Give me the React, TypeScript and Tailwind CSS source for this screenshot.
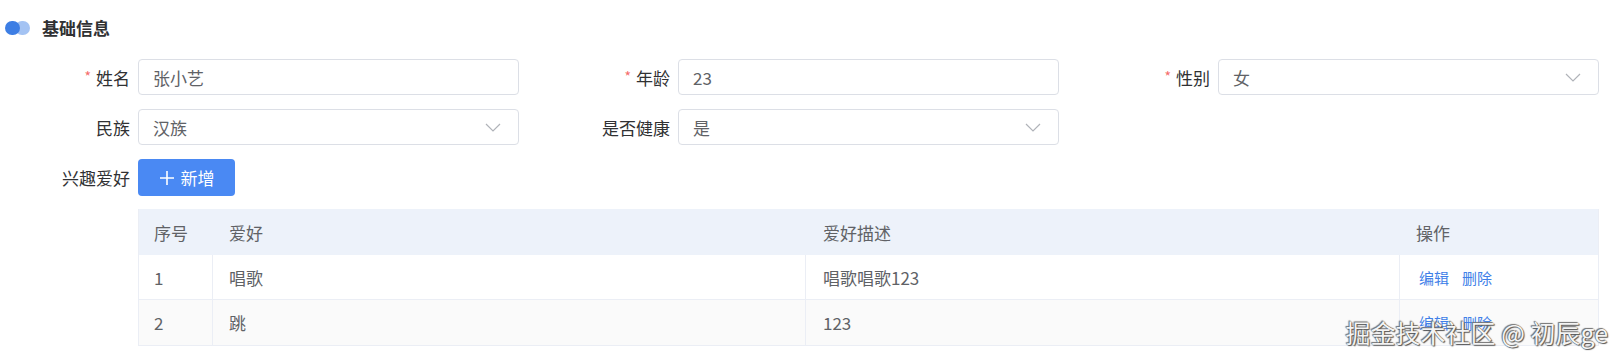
const hobbies = [
  { id: 1, name: '唱歌', desc: '唱歌唱歌123' },
  { id: 2, name: '跳', desc: '123' },
];

function Label({ text, required }: { text: string; required?: boolean }) {
  return (
    <div className="w-[78px] shrink-0 pr-2 flex items-center justify-end text-[17px] text-[#303133]">
      {required && <span className="text-[#f56c6c] text-[14px] mr-[5px] -mt-[2px]">*</span>}
      {text}
    </div>
  );
}

function Field({ value, select }: { value: string; select?: boolean }) {
  return (
    <div className="w-[381px] h-[36px] shrink-0 border border-[#dcdfe6] rounded-[4px] flex items-center justify-between pl-[14px] pr-[16px] text-[17px] text-[#606266]">
      <span>{value}</span>
      {select && (
        <svg width="16" height="9" viewBox="0 0 16 9" fill="none" className="mr-[1px]">
          <polyline points="1,1 8,8 15,1" stroke="#b0b3b9" strokeWidth="1.2" />
        </svg>
      )}
    </div>
  );
}

export default function App() {
  return (
    <div className="w-[1623px] h-[360px] bg-white relative overflow-hidden font-['Noto_Sans_CJK_SC',sans-serif] leading-none">
      <div className="h-[55px] flex items-center pl-[5px]">
        <div className="relative w-[26px] h-[14px] mr-[11px]">
          <span className="absolute left-[10px] top-0 w-[15px] h-[14px] rounded-full bg-[#a4c3f3]" />
          <span className="absolute left-0 top-0 w-[15px] h-[14px] rounded-full bg-[#3d7ee4]" />
        </div>
        <h1 className="text-[17px] font-bold text-[#303133]">基础信息</h1>
      </div>

      <div className="pl-[60px] pt-[4px]">
        <div className="flex h-[36px] mb-[14px]">
          <div className="w-[540px] shrink-0 flex">
            <Label text="姓名" required />
            <Field value="张小艺" />
          </div>
          <div className="w-[540px] shrink-0 flex">
            <Label text="年龄" required />
            <Field value="23" />
          </div>
          <div className="w-[540px] shrink-0 flex">
            <Label text="性别" required />
            <Field value="女" select />
          </div>
        </div>

        <div className="flex h-[36px] mb-[14px]">
          <div className="w-[540px] shrink-0 flex">
            <Label text="民族" />
            <Field value="汉族" select />
          </div>
          <div className="w-[540px] shrink-0 flex">
            <Label text="是否健康" />
            <Field value="是" select />
          </div>
        </div>

        <div className="flex h-[37px] mb-[13px]">
          <Label text="兴趣爱好" />
          <button className="w-[97px] h-[37px] rounded-[4px] bg-[#4a89f3] text-white text-[17px] flex items-center justify-center gap-[6px]">
            <svg width="16" height="16" viewBox="0 0 16 16" fill="none">
              <path d="M8 1v14M1 8h14" stroke="#fff" strokeWidth="1.6" />
            </svg>
            新增
          </button>
        </div>

        <div className="ml-[78px] w-[1461px] text-[17px] text-[#606266] border-b border-l border-r border-[#ebeef5]">
          <div className="flex h-[46px] bg-[#edf2fa] items-center">
            <div className="w-[74px] pl-[15px]">序号</div>
            <div className="w-[593px] pl-[16px]">爱好</div>
            <div className="w-[594px] pl-[17px]">爱好描述</div>
            <div className="flex-1 pl-[16px]">操作</div>
          </div>
          {hobbies.map((h, i) => (
            <div
              key={h.id}
              className={`flex h-[45px] items-stretch ${i % 2 === 1 ? 'bg-[#fafafa]' : 'bg-white'} ${i === 0 ? 'border-b border-[#ebeef5]' : ''}`}
            >
              <div className="w-[74px] pl-[15px] flex items-center border-r border-[#ebeef5]">{h.id}</div>
              <div className="w-[593px] pl-[16px] flex items-center border-r border-[#ebeef5]">{h.name}</div>
              <div className="w-[594px] pl-[17px] flex items-center border-r border-[#ebeef5]">{h.desc}</div>
              <div className="flex-1 pl-[19px] flex items-center gap-[13px] text-[15px] text-[#4080e8]">
                <span>编辑</span>
                <span>删除</span>
              </div>
            </div>
          ))}
        </div>
      </div>

      <div className="absolute right-[15px] bottom-[15px] text-[25px] text-[#f4f4f4] [text-shadow:0_0_1px_#444,1px_1px_1px_#555,-1px_-1px_1px_#777]">
        掘金技术社区 @ 初辰ge
      </div>
    </div>
  );
}
